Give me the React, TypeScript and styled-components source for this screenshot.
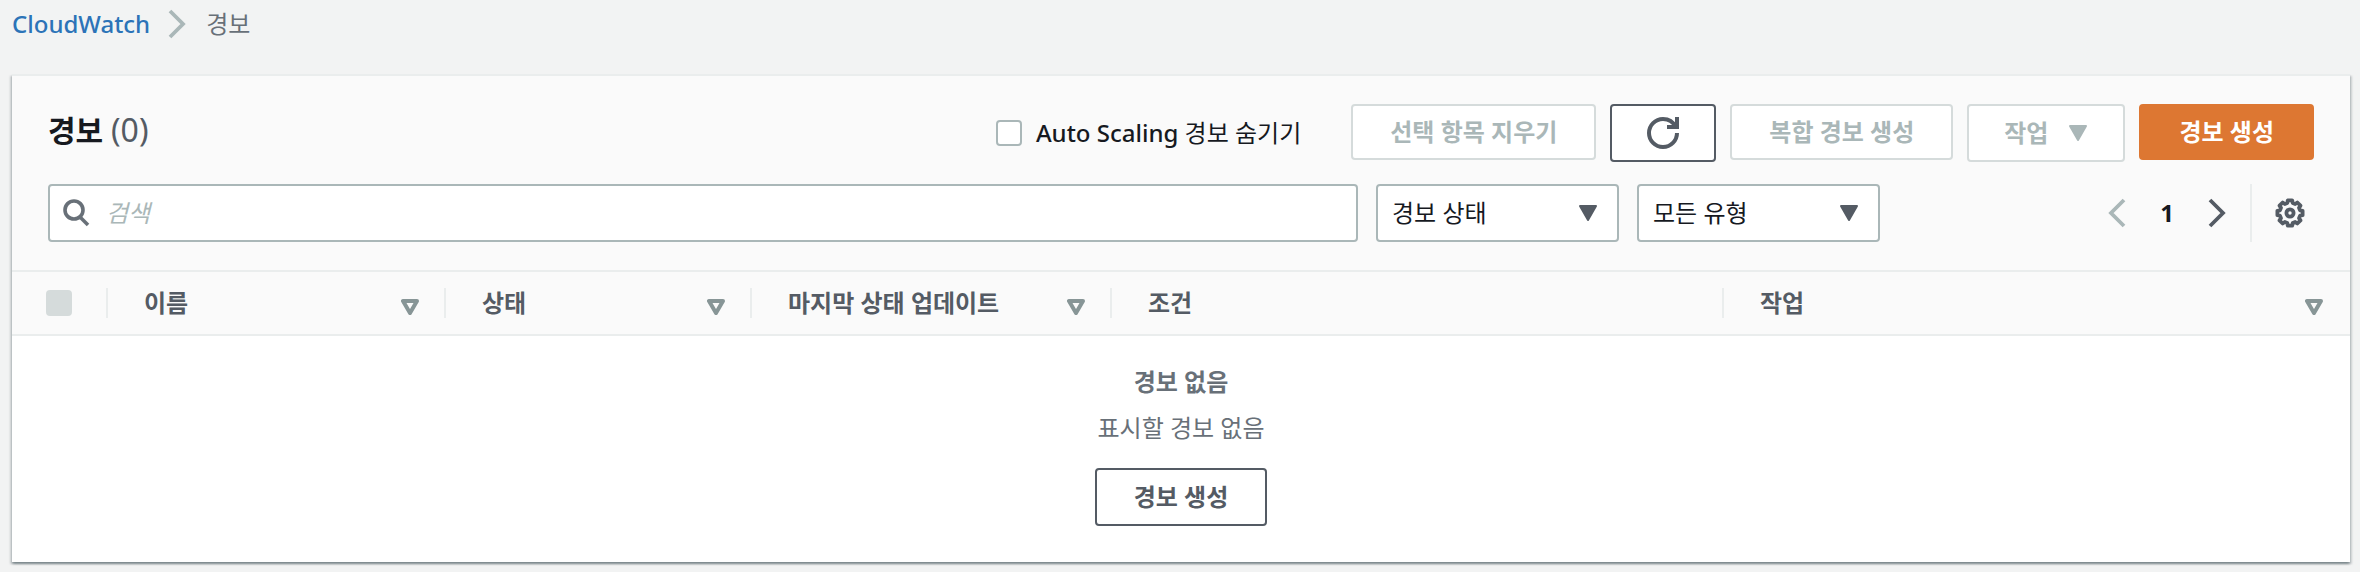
import React from "react";
import styled, { createGlobalStyle, css } from "styled-components";

const c = {
  page: "#f2f3f3",
  panel: "#fafafa",
  ink: "#16191f",
  slate: "#545b64",
  grey: "#687078",
  muted: "#aab7b8",
  disabled: "#d5dbdb",
  line: "#eaeded",
  sort: "#879596",
  link: "#2c73b8",
  orange: "#dd7732",
};

const GlobalStyle = createGlobalStyle`
  *, *::before, *::after { box-sizing: border-box; }
  body {
    margin: 0;
    background: ${c.page};
    color: ${c.ink};
    font-family: "Noto Sans", "Noto Sans CJK KR", sans-serif;
    font-size: 24px;
    line-height: 36px;
  }
  button, input, select { font: inherit; color: inherit; margin: 0; }
`;

const Page = styled.div`
  padding: 6px 10px 10px 12px;
`;

const Breadcrumbs = styled.nav`
  margin-bottom: 32px;

  ol {
    display: flex;
    align-items: center;
    gap: 20px;
    margin: 0;
    padding: 0;
    list-style: none;
  }
  li {
    display: flex;
    align-items: center;
    gap: 18px;
    color: ${c.grey};
  }
  svg {
    color: ${c.muted};
  }
`;

const CrumbLink = styled.a`
  color: ${c.link};
  font-weight: 500;
  text-decoration: none;
`;

const Panel = styled.section`
  border-top: 2px solid ${c.line};
  background: #fff;
  box-shadow:
    0 2px 2px 0 rgba(0, 28, 36, 0.3),
    2px 2px 2px 0 rgba(0, 28, 36, 0.15),
    -2px 2px 2px 0 rgba(0, 28, 36, 0.15);
`;

const PanelHeader = styled.header`
  display: flex;
  flex-direction: column;
  gap: 22px;
  padding: 28px 36px;
  background: ${c.panel};
  border-bottom: 2px solid ${c.line};
`;

const TitleRow = styled.div`
  display: flex;
  align-items: flex-start;
  justify-content: space-between;
`;

const Title = styled.h2`
  margin: 0;
  padding-top: 4px;
  font-size: 30px;
  line-height: 44px;
  font-weight: 700;

  span {
    color: ${c.slate};
    font-size: 32px;
    font-weight: 400;
  }
`;

const Actions = styled.div`
  display: flex;
  align-items: flex-start;
  gap: 14px;
`;

const HideToggle = styled.label`
  display: flex;
  align-items: center;
  gap: 14px;
  height: 58px;
  margin-right: 36px;

  b {
    font-weight: 500;
  }
`;

const Checkbox = styled.input`
  appearance: none;
  display: block;
  width: 26px;
  height: 26px;
  border: 2px solid ${c.muted};
  border-radius: 4px;
  background: #fff;

  &:disabled {
    border-color: ${c.disabled};
    background: ${c.disabled};
  }
`;

const Button = styled.button<{ $primary?: boolean; $icon?: boolean }>`
  display: inline-flex;
  align-items: center;
  justify-content: center;
  gap: 20px;
  min-height: 58px;
  padding: 8px 37px;
  border: 2px solid ${c.slate};
  border-radius: 4px;
  background: #fff;
  color: ${c.slate};
  font-weight: 700;
  white-space: nowrap;

  &:disabled {
    min-height: ${(p) => (p.$icon ? "58px" : "56px")};
    border-color: ${c.disabled};
    color: ${c.muted};
  }
  ${(p) =>
    p.$icon &&
    css`
      padding: 8px 35px;
    `}
  ${(p) =>
    p.$primary &&
    css`
      min-height: 56px;
      padding: 8px 38px;
      border-color: ${c.orange};
      background: ${c.orange};
      color: #fff;
    `}
`;

const FilterRow = styled.div`
  display: flex;
  align-items: center;
  justify-content: space-between;
  gap: 216px;
`;

const Filters = styled.div`
  display: flex;
  flex: 1;
  gap: 18px;
`;

const SearchBox = styled.label`
  display: flex;
  flex: 1;
  align-items: center;
  gap: 16px;
  height: 58px;
  padding: 0 12px;
  border: 2px solid ${c.muted};
  border-radius: 4px;
  background: #fff;
  color: ${c.grey};
`;

const SearchInput = styled.input`
  flex: 1;
  min-width: 0;
  padding: 0;
  border: 0;
  outline: 0;
  background: none;

  &::placeholder {
    color: ${c.muted};
    font-style: italic;
    opacity: 1;
  }
`;

const SelectBox = styled.div`
  display: grid;
  align-items: center;
  width: 243px;
  height: 58px;
  border: 2px solid ${c.muted};
  border-radius: 4px;
  background: #fff;
  color: ${c.slate};

  > * {
    grid-area: 1 / 1;
  }
  > svg {
    justify-self: end;
    margin-right: 19px;
    pointer-events: none;
  }
`;

const Select = styled.select`
  appearance: none;
  width: 100%;
  height: 100%;
  padding: 0 14px;
  border: 0;
  background: none;
  color: ${c.ink};
`;

const Pager = styled.div`
  display: flex;
  align-items: center;
  height: 58px;
`;

const IconButton = styled.button`
  display: flex;
  padding: 0 12px;
  border: 0;
  background: none;
  color: ${c.slate};

  &:disabled {
    color: ${c.muted};
  }
`;

const PageNumber = styled.span`
  width: 58px;
  text-align: center;
  font-weight: 700;
`;

const Settings = styled.div`
  display: flex;
  align-items: center;
  height: 58px;
  margin-left: 12px;
  padding-left: 14px;
  border-left: 2px solid ${c.line};

  button {
    padding: 0 9px;
  }
`;

const Table = styled.table`
  width: 100%;
  border-collapse: collapse;
  table-layout: fixed;
`;

const HeadCell = styled.th<{ $width?: number }>`
  width: ${(p) => (p.$width ? `${p.$width}px` : "auto")};
  padding: 13px 0;
  border-bottom: 2px solid ${c.line};
  background: ${c.panel};
  color: ${c.slate};
  font-weight: 700;
  text-align: left;
`;

const HeadContent = styled.div<{ $last?: boolean; $check?: boolean }>`
  display: flex;
  align-items: center;
  justify-content: space-between;
  height: 30px;
  margin: 3px 0;
  padding: ${(p) => (p.$check ? "0 34px" : "0 25px 0 36px")};
  border-right: 2px solid ${(p) => (p.$last ? "transparent" : c.line)};
  white-space: nowrap;
`;

const SortButton = styled.button`
  display: flex;
  padding: 8px 0 0;
  border: 0;
  background: none;
  color: ${c.sort};
`;

const EmptyCell = styled.td`
  padding: 28px 36px 36px;
  color: ${c.grey};
  text-align: center;

  strong {
    display: block;
    margin-bottom: 10px;
  }
  p {
    margin: 0 0 22px;
  }
  button {
    vertical-align: top;
  }
`;

const Chevron = ({ left }: { left?: boolean }) => (
  <svg width="18" height="30" viewBox="0 0 18 30" fill="none" stroke="currentColor" strokeWidth="3.800" aria-hidden="true">
    <path d={left ? "M16 2 3 15l13 13" : "M2 2l13 13L2 28"} />
  </svg>
);

const Caret = () => (
  <svg width="20" height="18" viewBox="0 0 20 18" fill="currentColor" stroke="currentColor" strokeWidth="2" strokeLinejoin="round" aria-hidden="true">
    <path d="M2 2h16l-8 14z" />
  </svg>
);

const SortIcon = () => (
  <svg width="18" height="16" viewBox="0 0 18 16" fill="none" stroke="currentColor" strokeWidth="4" strokeLinejoin="round" aria-hidden="true">
    <path d="M2 2h14L9 14z" />
  </svg>
);

const RefreshIcon = () => (
  <svg width="32" height="32" viewBox="0 0 16 16" fill="none" stroke="currentColor" strokeWidth="2" aria-hidden="true">
    <path d="M10 5h5V0" />
    <path d="M15 8c0 3.870-3.130 7-7 7s-7-3.130-7-7 3.130-7 7-7c2.790 0 5.200 1.630 6.330 4" />
  </svg>
);

const SearchIcon = () => (
  <svg width="28" height="28" viewBox="0 0 28 28" fill="none" stroke="currentColor" strokeWidth="3.600" aria-hidden="true">
    <circle cx="12" cy="11" r="9" />
    <path d="M18 18l8 8" />
  </svg>
);

// Outline of an eight-toothed wheel centred on (15, 15).
const gearPoints = Array.from({ length: 8 }, (_, tooth) =>
  [
    [-15, 10.4],
    [-10, 12.8],
    [10, 12.8],
    [15, 10.4],
  ].map(([offset, radius]) => {
    const angle = ((tooth * 45 + offset) * Math.PI) / 180;
    return `${(15 + radius * Math.cos(angle)).toFixed(2)},${(15 + radius * Math.sin(angle)).toFixed(2)}`;
  })
)
  .flat()
  .join(" ");

const GearIcon = () => (
  <svg width="30" height="30" viewBox="0 0 30 30" fill="none" stroke="currentColor" strokeWidth="3.800" strokeLinejoin="round" aria-hidden="true">
    <polygon points={gearPoints} />
    <circle cx="15" cy="15" r="3.600" />
  </svg>
);

const columns = [
  { label: "이름", width: 338, sortable: true },
  { label: "상태", width: 306, sortable: true },
  { label: "마지막 상태 업데이트", width: 360, sortable: true },
  { label: "조건", width: 612, sortable: false },
  { label: "작업", width: undefined, sortable: true },
];

const FilterSelect = ({ label }: { label: string }) => (
  <SelectBox>
    <Select aria-label={label} defaultValue={label}>
      <option>{label}</option>
    </Select>
    <Caret />
  </SelectBox>
);

export default function App() {
  return (
    <Page>
      <GlobalStyle />
      <Breadcrumbs aria-label="breadcrumb">
        <ol>
          <li>
            <CrumbLink href="#">CloudWatch</CrumbLink>
            <Chevron />
          </li>
          <li aria-current="page">경보</li>
        </ol>
      </Breadcrumbs>

      <Panel>
        <PanelHeader>
          <TitleRow>
            <Title>
              경보 <span>(0)</span>
            </Title>
            <Actions>
              <HideToggle>
                <Checkbox type="checkbox" />
                <span>
                  <b>Auto Scaling</b> 경보 숨기기
                </span>
              </HideToggle>
              <Button disabled>선택 항목 지우기</Button>
              <Button $icon aria-label="새로 고침">
                <RefreshIcon />
              </Button>
              <Button disabled>복합 경보 생성</Button>
              <Button $icon disabled>
                작업
                <Caret />
              </Button>
              <Button $primary>경보 생성</Button>
            </Actions>
          </TitleRow>
          <FilterRow>
            <Filters>
              <SearchBox>
                <SearchIcon />
                <SearchInput type="text" placeholder="검색" aria-label="검색" />
              </SearchBox>
              <FilterSelect label="경보 상태" />
              <FilterSelect label="모든 유형" />
            </Filters>
            <Pager>
              <IconButton disabled aria-label="이전 페이지">
                <Chevron left />
              </IconButton>
              <PageNumber>1</PageNumber>
              <IconButton aria-label="다음 페이지">
                <Chevron />
              </IconButton>
              <Settings>
                <IconButton aria-label="설정">
                  <GearIcon />
                </IconButton>
              </Settings>
            </Pager>
          </FilterRow>
        </PanelHeader>

        <Table>
          <thead>
            <tr>
              <HeadCell $width={96}>
                <HeadContent $check>
                  <Checkbox type="checkbox" disabled aria-label="모두 선택" />
                </HeadContent>
              </HeadCell>
              {columns.map((col, i) => (
                <HeadCell key={col.label} $width={col.width} scope="col">
                  <HeadContent $last={i === columns.length - 1}>
                    {col.label}
                    {col.sortable && (
                      <SortButton aria-label={`${col.label} 정렬`}>
                        <SortIcon />
                      </SortButton>
                    )}
                  </HeadContent>
                </HeadCell>
              ))}
            </tr>
          </thead>
          <tbody>
            <tr>
              <EmptyCell colSpan={6}>
                <strong>경보 없음</strong>
                <p>표시할 경보 없음</p>
                <Button>경보 생성</Button>
              </EmptyCell>
            </tr>
          </tbody>
        </Table>
      </Panel>
    </Page>
  );
}
